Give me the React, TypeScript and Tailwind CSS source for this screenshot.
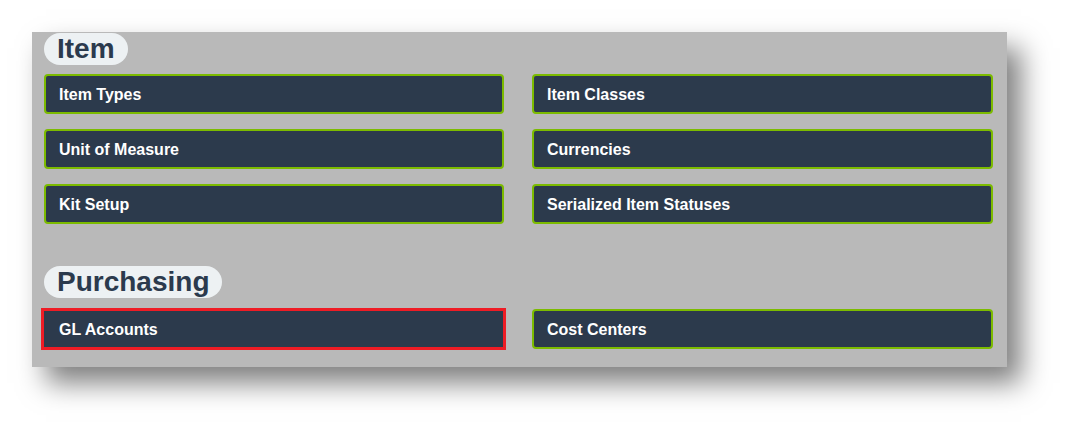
import React from "react";

function Btn({ label, highlight }: { label: string; highlight?: boolean }) {
  if (highlight) {
    return (
      <div className="w-[465px] h-[42px] -ml-[3px] -mt-[1px] border-[3px] border-[#ee1c25] bg-[#2c3a4c] flex items-center pl-[15px] pt-[1px]">
        <span className="text-white font-bold text-[16px] leading-none">{label}</span>
      </div>
    );
  }
  return (
    <div className="h-[40px] rounded-[4px] border-2 border-[#7cbb00] bg-[#2c3a4c] flex items-center pl-[13px] pt-[2px]">
      <span className="text-white font-bold text-[16px] leading-none">{label}</span>
    </div>
  );
}

function Pill({ label }: { label: string }) {
  return (
    <div className="flex">
      <div className="h-[32px] rounded-full bg-[#edf1f3] px-[13px] flex items-center">
        <span className="text-[#2b3a4d] font-bold text-[28px] leading-none">{label}</span>
      </div>
    </div>
  );
}

export default function App() {
  return (
    <div className="w-[1072px] h-[432px] bg-white pt-[32px] pl-[32px]" style={{ fontFamily: '"Liberation Sans", Arial, sans-serif' }}>
      <div className="w-[975px] h-[335px] bg-[#b9b9b9] shadow-[14px_16px_26px_rgba(0,0,0,0.5)] pl-[12px] pr-[15px] pt-[1px]">
        <Pill label="Item" />
        <div className="grid grid-cols-[460px_461px] gap-x-[28px] gap-y-[15px] mt-[9px]">
          <Btn label="Item Types" />
          <Btn label="Item Classes" />
          <Btn label="Unit of Measure" />
          <Btn label="Currencies" />
          <Btn label="Kit Setup" />
          <Btn label="Serialized Item Statuses" />
        </div>
        <div className="mt-[42px]">
          <Pill label="Purchasing" />
        </div>
        <div className="grid grid-cols-[460px_461px] gap-x-[28px] mt-[11px] items-start">
          <Btn label="GL Accounts" highlight />
          <Btn label="Cost Centers" />
        </div>
      </div>
    </div>
  );
}
